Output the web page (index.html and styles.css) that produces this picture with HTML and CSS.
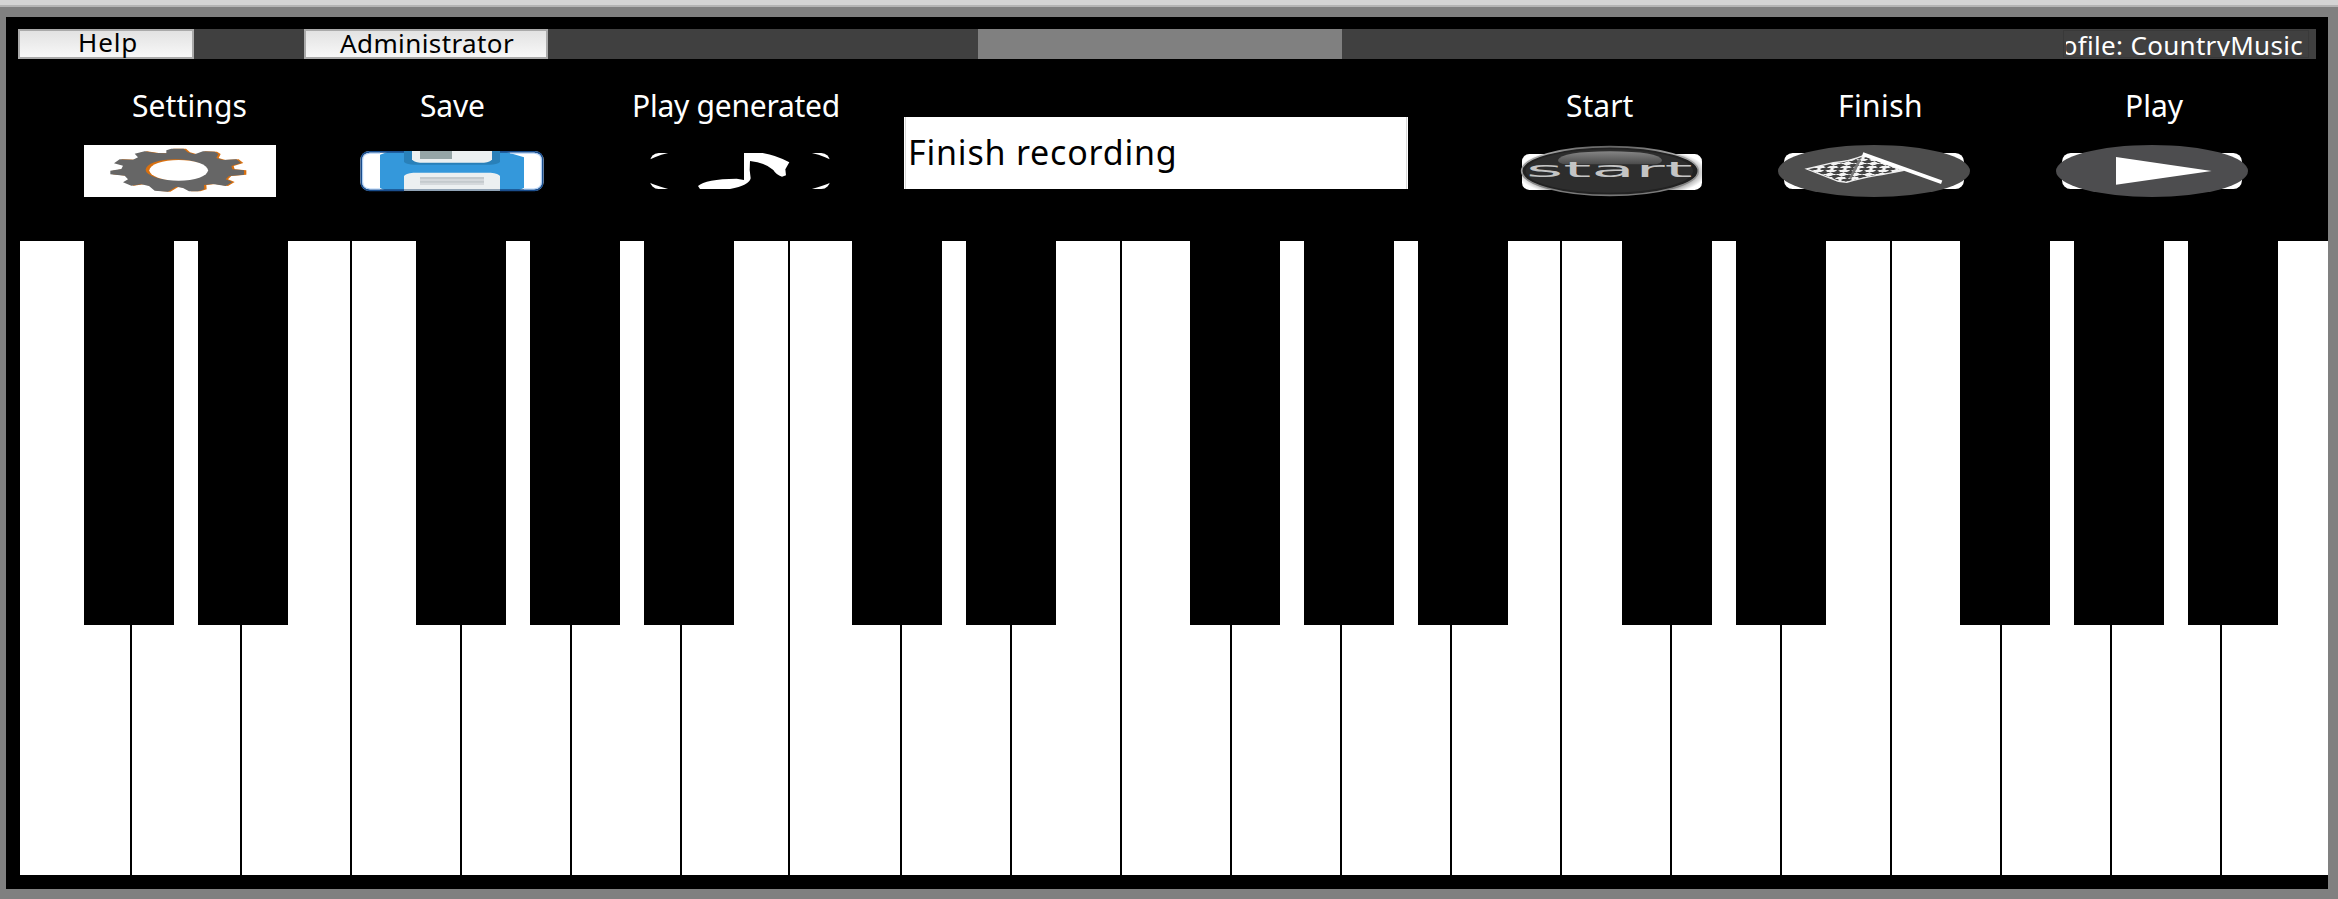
FILE: index.html
```html
<!DOCTYPE html>
<html lang="en">
<head>
<meta charset="utf-8">
<title>Piano</title>
<link rel="stylesheet" href="styles.css">
</head>
<body>
<div class="titlebar"></div>
<main class="piano">
  <nav class="menubar">
    <button class="menu-button help"><span>Help</span></button>
    <button class="menu-button admin"><span>Administrator</span></button>
    <div class="menu-slot"></div>
    <div class="profile"><div class="profile-clip"><span>Profile: CountryMusic</span></div></div>
  </nav>

  <section class="controls">
    <div class="control settings">
      <div class="label">Settings</div>
      <div class="icon">
        <svg width="192" height="52" viewBox="72 45 576 156">
          <defs>
            <path id="gear" d="M320 70L320 61L335 56H372L384 67L405 73L430 64L465 65L476 72L470 84L490 90L530 88L544 99L515 108L518 118L553 121V134L508 138L498 148L518 156L498 168L460 162L433 165L434 178L415 184H388L370 174L350 170L325 185L285 182L268 168L245 163L215 167L190 157L205 148L195 137L152 133V122L185 117L190 107L163 100L180 88L220 89L235 82L225 71L255 64L290 69Z"/>
          </defs>
          <path fill="#fff" d="M72 45h576v156H72z"/>
          <use href="#gear" fill="#d9700f" x="6"/>
          <use href="#gear" fill="#666" x="-1"/>
          <ellipse cx="346" cy="119" rx="89" ry="31" fill="#d9700f"/>
          <ellipse cx="356" cy="121" rx="88" ry="31" fill="#fff"/>
        </svg>
      </div>
    </div>

    <div class="control save">
      <div class="label">Save</div>
      <div class="icon">
        <svg width="184" height="42" viewBox="60 60 552 126">
          <clipPath id="disk"><rect x="61" y="63" width="550" height="120" rx="27"/></clipPath>
          <g clip-path="url(#disk)">
            <path fill="#fff" d="M60 60h552v126H60z"/>
            <path fill="#3498db" d="M120 74L150 63H490L552 82V174L530 183H140L120 174Z"/>
            <path fill="#2980b9" d="M192 60h288v36q-10 8-30 8H222q-20 0-30-8z"/>
            <path fill="#ecf0f1" d="M216 60h240v28q-4 9-24 10H240q-20-1-24-10z"/>
            <path fill="#95a5a6" d="M240 60h96v27h-96z"/>
            <path fill="#ecf0f1" d="M192 186v-48q4-8 28-10h232q24 2 28 10v48z"/>
            <path fill="#d5d9dc" d="M240 141h192v24H240z"/>
            <path fill="#c4cacd" d="M240 141h192v6H240zM240 153h192v5H240z"/>
            <path fill="#0b315f" fill-opacity=".4" d="M60 177h552v9H60z"/>
          </g>
          <path fill="none" stroke="#194d8d" stroke-width="5" d="M192 181H88Q64 178 64 156V90Q64 67 88 65.500H192M480 65.500H584Q608 67 608 90V156Q608 178 584 181H480"/>
          <path fill="none" stroke="#a9ccf5" stroke-width="3" d="M120 177H90Q68 174 68 156V90Q68 72 90 69.500H120M510 69.500H582Q604 72 604 90V156Q604 174 582 177H552"/>
        </svg>
      </div>
    </div>

    <div class="control generated">
      <div class="label">Play generated</div>
      <div class="icon">
        <svg width="180" height="36" viewBox="60 69 540 108">
          <rect x="60" y="69" width="540" height="108" rx="26" fill="#fff"/>
          <ellipse cx="330" cy="123" rx="305" ry="76"/>
          <path fill="#fff" d="M342 69H398Q440 76 478 97L466 118L468 136L456 140Q438 134 430 120Q405 97 360 93L359 120L362 145Q358 166 300 177H210L204 168Q226 147 320 146L342 150Z"/>
        </svg>
      </div>
    </div>

    <div class="message">Finish recording</div>

    <div class="control start">
      <div class="label">Start</div>
      <div class="icon">
        <svg width="184" height="52" viewBox="60 42 552 156">
          <defs>
            <linearGradient id="gloss" x1="0" y1="0" x2="0" y2="1"><stop offset="0" stop-color="#858585"/><stop offset="1" stop-color="#4a4a4a"/></linearGradient>
            <radialGradient id="halo"><stop offset=".8" stop-color="#777"/><stop offset="1" stop-color="#fff"/></radialGradient>
            <linearGradient id="rim" x1="0" y1="0" x2="0" y2="1"><stop offset="0" stop-color="#666"/><stop offset=".15" stop-color="#aaa"/><stop offset=".5" stop-color="#999"/><stop offset="1" stop-color="#777"/></linearGradient>
          </defs>
          <clipPath id="plate"><rect x="66" y="69" width="540" height="108" rx="22"/></clipPath>
          <g clip-path="url(#plate)">
            <path fill="#fff" d="M60 60h552v126H60z"/>
            <ellipse cx="336" cy="124" rx="285" ry="85" fill="url(#halo)"/>
          </g>
          <ellipse cx="330" cy="120" rx="265" ry="73" fill="#222" stroke="url(#rim)" stroke-width="5"/>
          <ellipse cx="328" cy="120" rx="251" ry="65" fill="#2d2d2d"/>
          <path fill="url(#gloss)" d="M174 87Q184 62 330 61Q476 62 486 87Q486 99 460 100H200Q174 99 174 87Z"/>
          <text class="badge-text" x="78" y="139" textLength="500" lengthAdjust="spacingAndGlyphs">start</text>
        </svg>
      </div>
    </div>

    <div class="control finish">
      <div class="label">Finish</div>
      <div class="icon">
        <svg width="192" height="52" viewBox="834 45 576 156">
          <defs>
            <pattern id="checks" width="2" height="2" patternUnits="userSpaceOnUse" patternTransform="matrix(22 -5.500 17 5.500 918 117)">
              <path fill="#f4f4f4" d="M0 0h2v2H0z"/>
              <path fill="#444" d="M0 0h1v1H0zM1 1H2V2H1z"/>
            </pattern>
          </defs>
          <rect x="852" y="69" width="540" height="108" rx="26" fill="#fff"/>
          <ellipse cx="1122" cy="123" rx="288" ry="78" fill="#4d4d4d"/>
          <path fill="url(#checks)" stroke="#eee" stroke-width="4" d="M920 117L1000 98Q1050 94 1092 76L1208 122Q1160 132 1130 136Q1080 145 1040 157L1015 154Z"/>
          <path stroke="#777" stroke-width="8" d="M1080 88L1050 146"/>
          <path fill="none" stroke="#fff" stroke-width="11" d="M1088 72L1325 157"/>
        </svg>
      </div>
    </div>

    <div class="control play">
      <div class="label">Play</div>
      <div class="icon">
        <svg width="192" height="52" viewBox="468 435 576 156">
          <rect x="486" y="459" width="540" height="108" rx="26" fill="#fff"/>
          <ellipse cx="756" cy="513" rx="288" ry="78" fill="#4d4d4f"/>
          <path fill="#fff" d="M648 471L935 513L648 554Z"/>
        </svg>
      </div>
    </div>
  </section>

  <section class="keyboard">
    <div class="white-keys">
      <i class="wide"></i><i></i><i></i><i></i><i></i><i></i><i class="narrow"></i><i class="wide"></i><i></i><i></i><i></i><i></i><i></i><i></i><i></i><i></i><i></i><i></i><i></i><i></i><i class="last"></i>
    </div>
    <div class="black-keys">
      <div class="group"><i></i><i></i></div>
      <div class="group after-two"><i></i><i></i><i></i></div>
      <div class="group after-three"><i></i><i></i></div>
      <div class="group second-octave"><i></i><i></i><i></i></div>
      <div class="group third-octave"><i></i><i></i></div>
      <div class="group last-group"><i></i><i></i><i></i></div>
    </div>
  </section>
</main>
</body>
</html>
```
FILE: styles.css
```css
* { box-sizing: border-box; }
body {
  margin: 0;
  height: 899px;
  overflow: hidden;
  background: #808080;
  font-family: "Noto Sans", "Open Sans", sans-serif;
}
.titlebar {
  height: 7px;
  background: #d4d4d4;
  border-bottom: 2px solid #b4b4b4;
}
.piano {
  margin: 10px 10px 0 6px;
  height: 872px;
  padding-top: 12px;
  background: #000;
}

/* Menu bar */
.menubar {
  display: flex;
  height: 30px;
  margin: 0 12px;
  background: #404040;
}
.menu-button {
  height: 30px;
  padding: 0;
  border: 2px solid #aaa;
  background: linear-gradient(#e2e2e2, #f8f8f8);
  color: #000;
  font: 26px/26px "Noto Sans", sans-serif;
  white-space: nowrap;
  text-align: left;
}
.menu-button span { display: block; }
.help { width: 176px; padding-left: 58px; letter-spacing: .9px; }
.help span { margin-top: -5px; }
.admin { width: 244px; margin-left: 110px; padding-left: 34px; letter-spacing: .4px; }
.admin span { margin-top: -2px; }
.menu-slot { width: 364px; margin-left: 430px; background: #808080; }
.profile {
  width: 246px;
  height: 28px;
  margin: 1px 7px 0 auto;
  padding: 1px 2px;
  border: 1px solid #393939;
}
.profile-clip {
  display: flex;
  justify-content: flex-end;
  height: 24px;
  padding-right: 3px;
  overflow: hidden;
  color: #fff;
  font-size: 26px;
  line-height: 26px;
  letter-spacing: .3px;
  white-space: nowrap;
}

/* Control row */
.controls {
  display: flex;
  height: 182px;
  padding: 27px 0 0 78px;
}
.label {
  height: 40px;
  color: #fff;
  font-size: 30px;
  line-height: 40px;
  white-space: nowrap;
}
.icon {
  display: flex;
  align-items: center;
  height: 52px;
  margin-top: 19px;
}
.icon svg { display: block; }
.settings { width: 192px; }
.settings .label { padding-left: 48px; letter-spacing: .1px; }
.save { width: 184px; margin-left: 84px; }
.save .label { padding-left: 60px; letter-spacing: -.2px; }
.generated { width: 210px; margin-left: 86px; }
.generated .label { padding-left: 2px; letter-spacing: -.25px; }
.generated .icon { padding-left: 20px; }
.message {
  width: 504px;
  height: 72px;
  margin: 31px 0 0 64px;
  padding-left: 4px;
  background: #fff;
  box-shadow: inset 1px 0 #fff, inset 2px 0 #d8d8d8, inset -1px 0 #fff, inset -2px 0 #d8d8d8;
  font-size: 34px;
  line-height: 71px;
  letter-spacing: .8px;
}
.start { width: 184px; margin-left: 112px; }
.start .label { padding-left: 46px; }
.badge-text { font: 64px "DejaVu Sans", sans-serif; fill: #c4c4c4; }
.finish { width: 192px; margin-left: 74px; }
.finish .label { padding-left: 60px; letter-spacing: .4px; }
.play { width: 192px; margin-left: 86px; }
.play .label { padding-left: 69px; }

/* Keyboard */
.keyboard {
  position: relative;
  height: 634px;
  margin-left: 14px;
}
.white-keys { display: flex; height: 634px; }
.white-keys i {
  flex: none;
  width: 110px;
  background: #fff;
  border-right: 2px solid #000;
}
.white-keys .wide { width: 112px; }
.white-keys .narrow { width: 108px; }
.white-keys .last { width: 106px; border-right: 0; }
.black-keys {
  position: absolute;
  top: 0;
  left: 64px;
  display: flex;
}
.group { display: flex; gap: 24px; }
.group i { width: 90px; height: 384px; background: #000; }
.after-two { margin-left: 128px; }
.after-three { margin-left: 118px; }
.second-octave { margin-left: 134px; }
.third-octave { margin-left: 114px; }
.last-group { margin-left: 134px; }
```
